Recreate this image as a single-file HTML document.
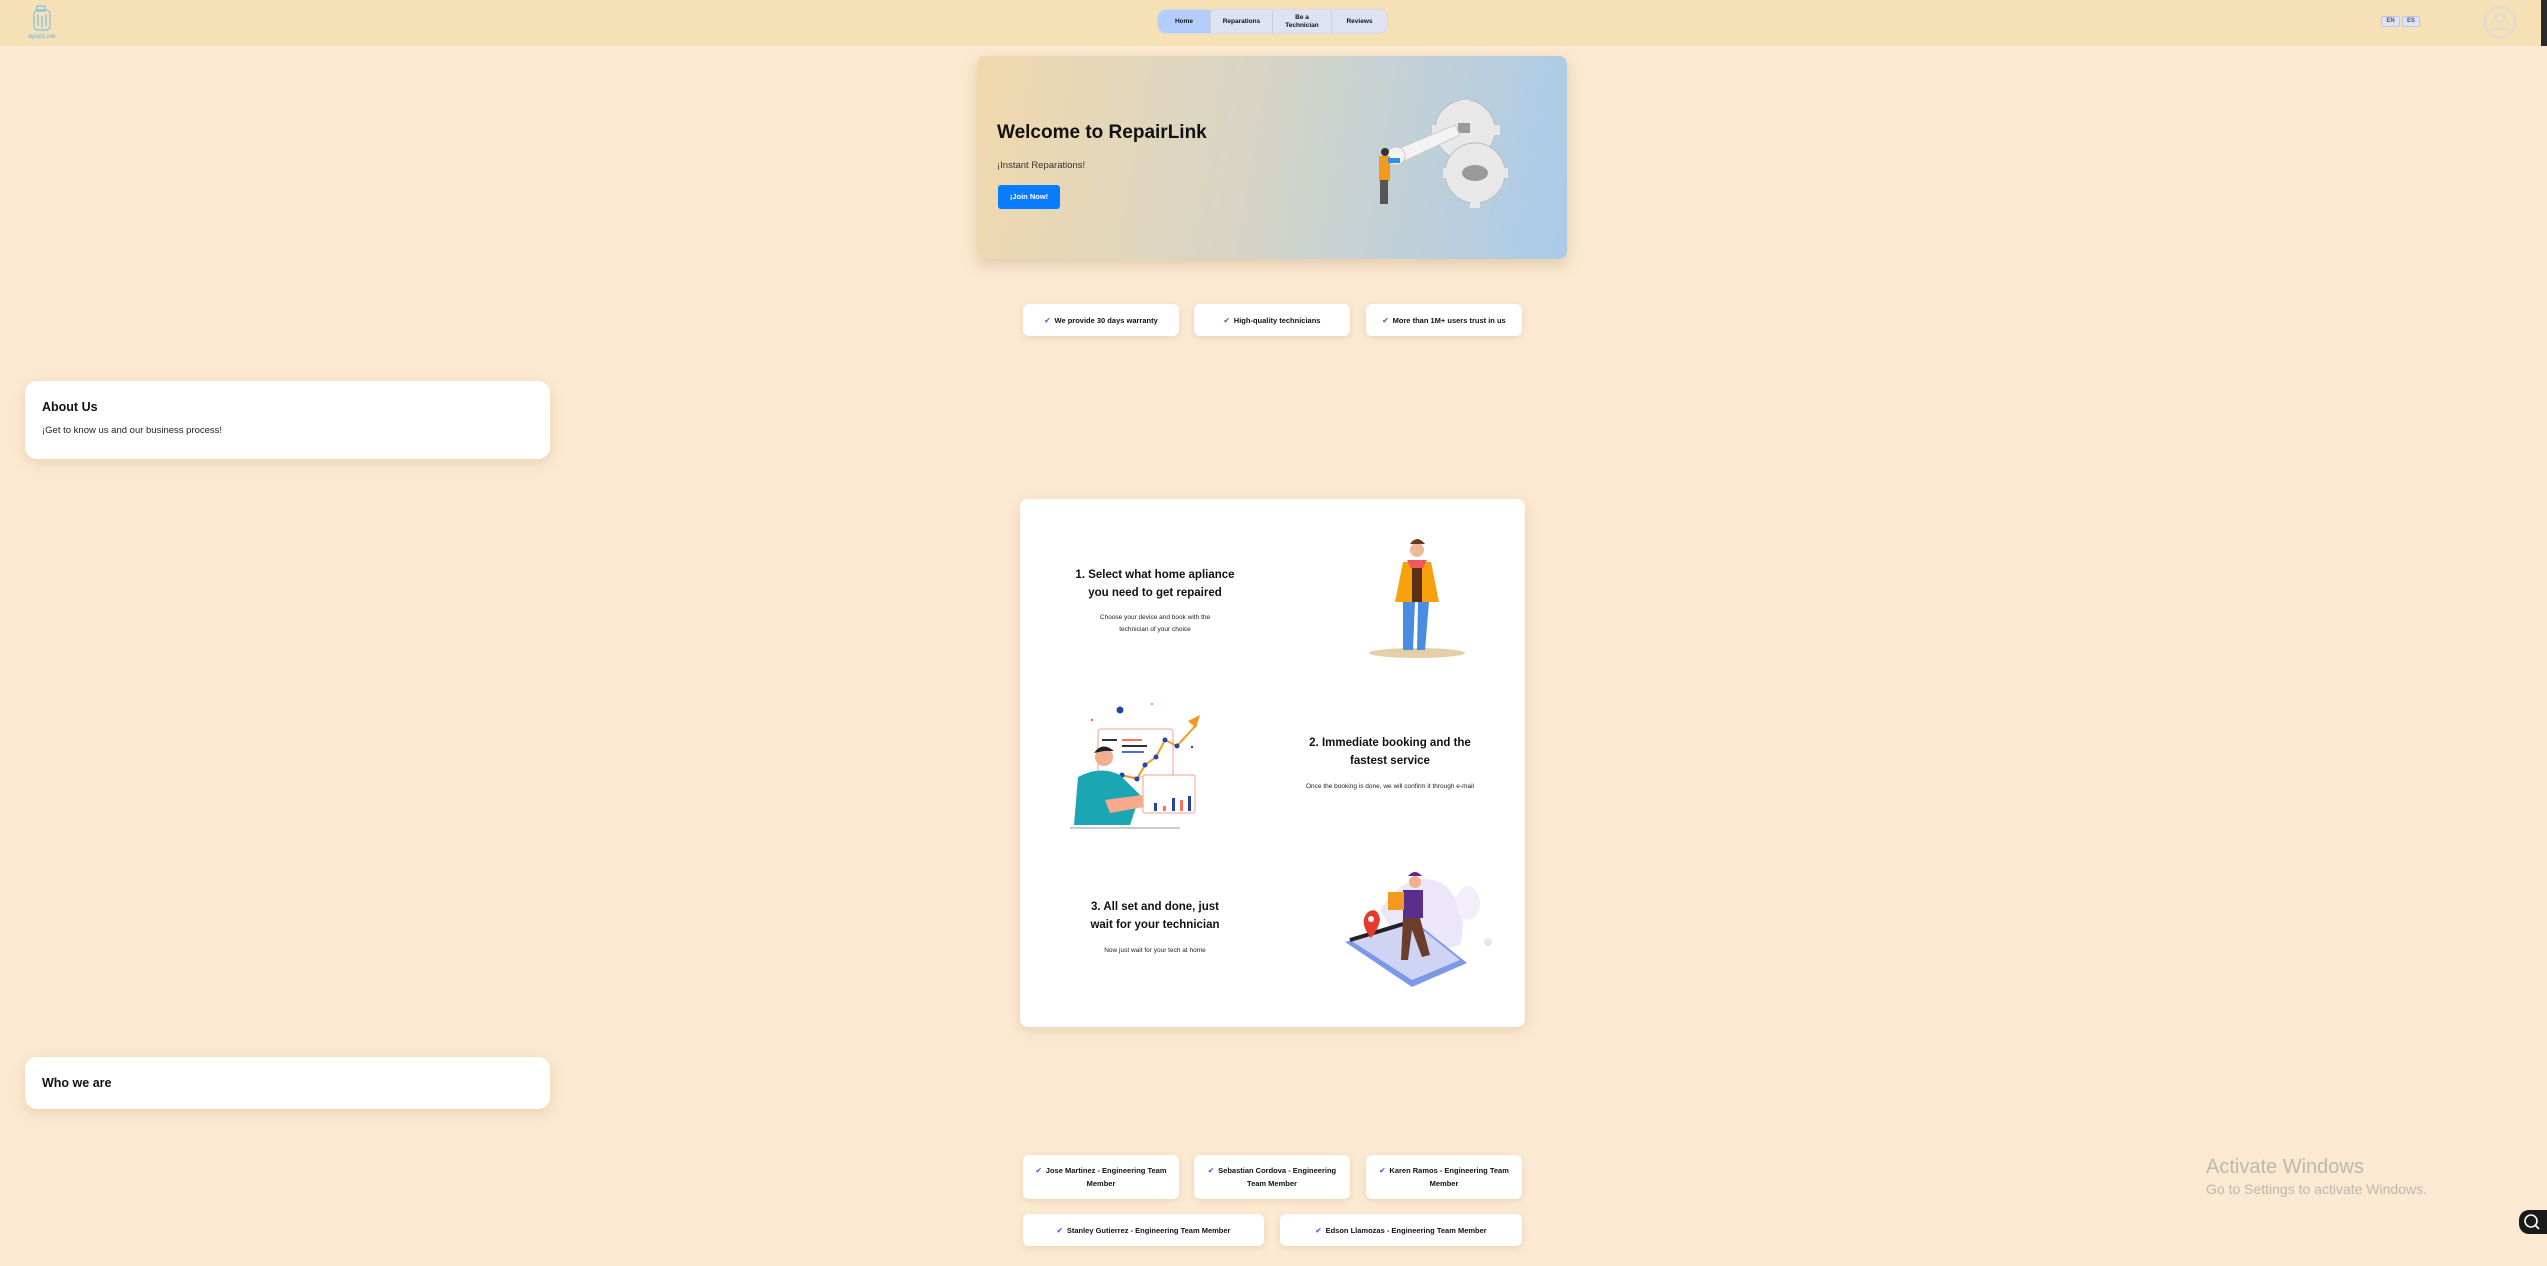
<!DOCTYPE html>
<html><head><meta charset="utf-8"><style>
*{margin:0;padding:0;box-sizing:border-box}
body{width:2547px;height:1266px;background:#fbe9d1;font-family:"Liberation Sans",Arial,sans-serif;position:relative;overflow:hidden}
.abs{position:absolute}
.hdr{left:0;top:0;width:2547px;height:46px;background:#f6e0b5}
.nav{left:1158px;top:10px;width:229px;height:23px;border-radius:8px;overflow:hidden;display:flex;box-shadow:0 0 0 1px #d8d8e0}
.nav div{display:flex;align-items:center;justify-content:center;text-align:center;font-size:6.5px;font-weight:bold;color:#111;background:#dde3f5;border-right:1px solid #d0d0d0;line-height:8px}
.card{background:#fff;border-radius:6px;box-shadow:0 2px 6px rgba(200,160,110,.25);display:flex;align-items:center;justify-content:center;text-align:center;font-size:7.5px;font-weight:bold;color:#111;line-height:13px}
.ck{color:#7a5bd6;margin-right:4px}
.big{background:#fff;border-radius:12px;box-shadow:0 4px 12px rgba(200,160,110,.3)}
.st{position:absolute;text-align:center;font-weight:bold;font-size:11.5px;line-height:18px;color:#111}
.sd{position:absolute;text-align:center;font-size:6.5px;line-height:12px;color:#222}
</style></head><body>
<div class="abs hdr"></div>
<svg class="abs" style="left:28px;top:4px" width="36" height="36" viewBox="0 0 36 36" fill="none" stroke="#7ec3ea" stroke-width="1.2">
<rect x="6" y="6" width="16" height="20" rx="4"/><rect x="9" y="2" width="8" height="5"/><line x1="10" y1="10" x2="10" y2="22"/><line x1="14" y1="12" x2="14" y2="24"/><line x1="18" y1="10" x2="18" y2="22"/>
<text x="12" y="34" font-size="6" fill="#7ec3ea" stroke="none" text-anchor="middle" font-family="Liberation Sans" font-weight="bold">RepairLink</text></svg>
<div class="abs nav"><div style="width:53px;background:#b3cdfd">Home</div><div style="width:62px">Reparations</div><div style="width:59px">Be a<br>Technician</div><div style="width:55px;border:none">Reviews</div></div>
<div class="abs" style="left:2381px;top:16px;width:19px;height:11px;background:#dde3f5;border:1px solid #b8c8f0;border-radius:2px;font-size:6px;font-weight:bold;color:#555;text-align:center;line-height:9px">EN</div>
<div class="abs" style="left:2402px;top:16px;width:18px;height:11px;background:#dde3f5;border:1px solid #b8c8f0;border-radius:2px;font-size:6px;font-weight:bold;color:#555;text-align:center;line-height:9px">ES</div>
<svg class="abs" style="left:2482px;top:4px" width="36" height="36" viewBox="0 0 36 36" fill="none" stroke="#e3dcd0" stroke-width="2.2"><circle cx="18" cy="18" r="15"/><circle cx="18" cy="14" r="4.5"/><path d="M8 28c4-5 16-5 20 0"/></svg>

<div class="abs" style="left:977px;top:56px;width:590px;height:203px;border-radius:8px;background:linear-gradient(100deg,#f1d8ad 0%,#d8d5c5 45%,#a9cbea 100%);box-shadow:0 6px 14px rgba(180,150,110,.35)"></div>
<div class="abs" style="left:997px;top:122px;font-size:19px;font-weight:bold;color:#111">Welcome to RepairLink</div>
<div class="abs" style="left:997px;top:160px;font-size:9.5px;color:#333">¡Instant Reparations!</div>
<div class="abs" style="left:998px;top:185px;width:62px;height:24px;background:#0a7cff;border-radius:3px;color:#fff;font-size:7.5px;font-weight:bold;text-align:center;line-height:24px">¡Join Now!</div>
<svg class="abs" style="left:1360px;top:100px" width="160" height="110" viewBox="0 0 160 110">
<g fill="#e8e8e8" stroke="#bdbdbd" stroke-width="1"><circle cx="105" cy="30" r="30"/><circle cx="115" cy="73" r="30"/></g>
<g fill="#e8e8e8"><rect x="100" y="-3" width="10" height="10"/><rect x="130" y="25" width="10" height="10"/><rect x="72" y="25" width="10" height="10"/><rect x="138" y="68" width="10" height="10"/><rect x="110" y="98" width="10" height="10"/><rect x="83" y="68" width="10" height="10"/></g>
<rect x="98" y="23" width="12" height="10" fill="#9a9a9a"/><ellipse cx="115" cy="73" rx="13" ry="8" fill="#9a9a9a"/>
<path d="M35 50 L95 25 L100 35 L42 62 Z" fill="#f3f3f3" stroke="#ccc"/>
<circle cx="36" cy="56" r="9" fill="#f3f3f3" stroke="#ccc"/>
<circle cx="25" cy="52" r="4" fill="#333"/><rect x="19" y="56" width="11" height="25" fill="#f39a1e"/><rect x="28" y="58" width="12" height="5" fill="#2e8ee8"/><rect x="20" y="80" width="8" height="24" fill="#555"/></svg>

<div class="abs card" style="left:1023px;top:304px;width:156px;height:32px"><span class="ck">✔</span>We provide 30 days warranty</div>
<div class="abs card" style="left:1194px;top:304px;width:156px;height:32px"><span class="ck">✔</span>High-quality technicians</div>
<div class="abs card" style="left:1366px;top:304px;width:156px;height:32px"><span class="ck">✔</span>More than 1M+ users trust in us</div>

<div class="abs big" style="left:25px;top:381px;width:525px;height:78px"></div>
<div class="abs" style="left:42px;top:400px;font-size:12.5px;font-weight:bold;color:#111">About Us</div>
<div class="abs" style="left:42px;top:425px;font-size:9.5px;color:#222">¡Get to know us and our business process!</div>

<div class="abs big" style="left:1020px;top:499px;width:505px;height:528px;border-radius:8px"></div>
<div class="st" style="left:1055px;top:566px;width:200px">1. Select what home apliance<br>you need to get repaired</div>
<div class="sd" style="left:1070px;top:612px;width:170px">Choose your device and book with the<br>technician of your choice</div>
<svg class="abs" style="left:1365px;top:530px" width="110" height="135" viewBox="0 0 110 135">
<ellipse cx="52" cy="123" rx="48" ry="5" fill="#e5cfa8"/>
<circle cx="52" cy="20" r="7" fill="#f0b896"/><path d="M45 14 Q52 4 60 14 Z" fill="#6a3b22"/>
<path d="M38 32 L66 32 L74 72 L30 72 Z" fill="#f7a10c"/><rect x="47" y="32" width="10" height="40" fill="#5b2e1a"/><path d="M42 30 L62 30 L58 38 L46 38Z" fill="#ec5a5a"/>
<path d="M38 72 L50 72 L48 120 L38 120Z M53 72 L64 72 L60 120 L52 120Z" fill="#4a8de0"/></svg>

<svg class="abs" style="left:1070px;top:695px" width="140" height="140" viewBox="0 0 140 140">
<circle cx="50" cy="15" r="3.5" fill="#1f45a8"/><circle cx="22" cy="25" r="1.2" fill="#ee6a4a"/><circle cx="82" cy="9" r="1" fill="#1fbfd0"/><circle cx="122" cy="52" r="1.2" fill="#1f45a8"/>
<rect x="28" y="34" width="75" height="48" rx="3" fill="#fff" stroke="#f3a190"/>
<rect x="32" y="44" width="15" height="2" fill="#333"/><rect x="52" y="44" width="20" height="2" fill="#f3755d"/><rect x="52" y="50" width="25" height="2" fill="#333"/><rect x="52" y="56" width="22" height="2" fill="#4a6fd0"/>
<polyline points="52,80 67,84 75,70 86,62 95,45 107,51 127,29" fill="none" stroke="#f39a1e" stroke-width="2"/><polygon points="118,26 130,20 126,33" fill="#f39a1e"/>
<g fill="#1f45a8"><circle cx="52" cy="80" r="2.5"/><circle cx="67" cy="84" r="2.5"/><circle cx="75" cy="70" r="2.5"/><circle cx="86" cy="62" r="2.5"/><circle cx="95" cy="45" r="2.5"/><circle cx="107" cy="51" r="2.5"/></g>
<rect x="73" y="80" width="52" height="38" rx="2" fill="#fff" stroke="#f3a190"/>
<g><rect x="84" y="108" width="3" height="8" fill="#1f45a8"/><rect x="93" y="111" width="3" height="5" fill="#f3755d"/><rect x="102" y="103" width="3" height="13" fill="#1f45a8"/><rect x="110" y="105" width="3" height="11" fill="#f3755d"/><rect x="118" y="101" width="3" height="15" fill="#1f45a8"/></g>
<circle cx="34" cy="62" r="9" fill="#f2b090"/><path d="M24 58 Q32 46 44 56 L34 56 Z" fill="#222"/>
<path d="M4 130 L8 82 Q30 70 50 80 L70 100 L60 130 Z" fill="#1aa6b2"/><path d="M35 105 L72 100 L74 112 L40 118Z" fill="#f7a98a"/>
<line x1="0" y1="133" x2="110" y2="133" stroke="#999"/></svg>

<div class="st" style="left:1290px;top:734px;width:200px">2. Immediate booking and the<br>fastest service</div>
<div class="sd" style="left:1280px;top:781px;width:220px">Once the booking is done, we will confirm it through e-mail</div>

<div class="st" style="left:1055px;top:898px;width:200px">3. All set and done, just<br>wait for your technician</div>
<div class="sd" style="left:1055px;top:945px;width:200px">Now just wait for your tech at home</div>
<svg class="abs" style="left:1340px;top:860px" width="160" height="140" viewBox="0 0 160 140">
<path d="M40 50 Q70 5 105 25 Q130 50 120 85 L70 100 Z" fill="#ece6fa"/><ellipse cx="128" cy="43" rx="12" ry="17" fill="#f2eefc"/><circle cx="148" cy="82" r="4" fill="#e6e6ef"/>
<polygon points="5,82 73,60 127,103 72,127" fill="#7c99e6"/><polygon points="10,80 73,62 120,100 72,120" fill="#cfd4f4"/>
<path d="M10 80 L70 62" stroke="#222" stroke-width="4"/>
<path d="M31 78 Q18 62 28 52 Q38 46 40 60 Q38 70 31 78Z" fill="#e53a30"/><circle cx="31" cy="59" r="3" fill="#fff"/>
<circle cx="75" cy="22" r="6" fill="#f2b090"/><path d="M68 16 Q75 8 82 16Z" fill="#5c2a8c"/>
<rect x="63" y="30" width="20" height="28" fill="#5b2e8c"/><rect x="48" y="32" width="16" height="18" fill="#f39a1e"/>
<path d="M63 58 L80 58 L90 95 L82 97 L72 70 L68 100 L61 100Z" fill="#6b3d2a"/></svg>

<div class="abs big" style="left:25px;top:1057px;width:525px;height:52px"></div>
<div class="abs" style="left:42px;top:1076px;font-size:12.5px;font-weight:bold;color:#111">Who we are</div>

<div class="abs card" style="left:1023px;top:1155px;width:156px;height:44px;padding:0 8px"><span><span class="ck">✔</span>Jose Martinez - Engineering Team Member</span></div>
<div class="abs card" style="left:1194px;top:1155px;width:156px;height:44px;padding:0 8px"><span><span class="ck">✔</span>Sebastian Cordova - Engineering Team Member</span></div>
<div class="abs card" style="left:1366px;top:1155px;width:156px;height:44px;padding:0 8px"><span><span class="ck">✔</span>Karen Ramos - Engineering Team Member</span></div>
<div class="abs card" style="left:1023px;top:1214px;width:241px;height:32px"><span class="ck">✔</span>Stanley Gutierrez - Engineering Team Member</div>
<div class="abs card" style="left:1280px;top:1214px;width:242px;height:32px"><span class="ck">✔</span>Edson Llamozas - Engineering Team Member</div>

<div class="abs" style="left:2206px;top:1156px;font-size:20px;color:#bcb7b0">Activate Windows</div>
<div class="abs" style="left:2206px;top:1181px;font-size:14px;color:#bcb7b0">Go to Settings to activate Windows.</div>
<div class="abs" style="left:2519px;top:1210px;width:30px;height:24px;border-radius:10px 0 0 10px;background:#1a1a1a"></div>
<svg class="abs" style="left:2522px;top:1212px" width="20" height="20" viewBox="0 0 20 20" fill="none" stroke="#fff" stroke-width="1.6"><circle cx="9" cy="9" r="6"/><line x1="13" y1="13" x2="17" y2="17"/></svg>
<div class="abs" style="left:2541px;top:0;width:6px;height:46px;background:#2a2a2a"></div>
</body></html>
